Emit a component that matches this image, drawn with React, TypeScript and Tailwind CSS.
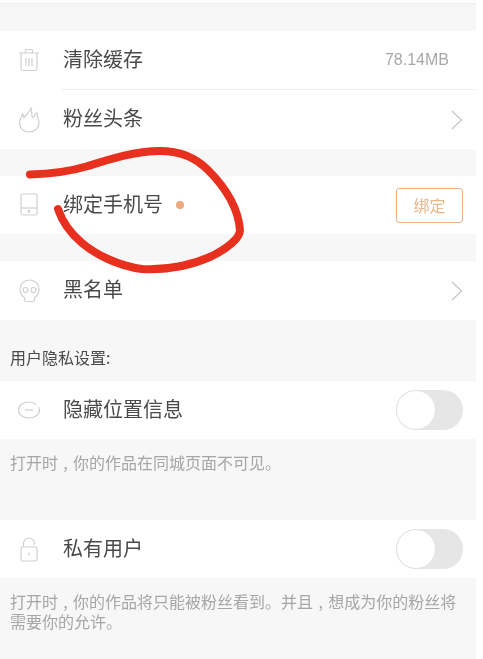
import React from "react";

const cjk = { fontFamily: '"Noto Sans CJK SC", "Noto Sans", sans-serif' };

function Trash() {
  return (
    <svg width="22" height="24" viewBox="0 0 22 24" fill="none" stroke="#cfcfcf" strokeWidth="1.2">
      <path d="M1 5h20M7.500 5V2.500a1 1 0 0 1 1-1h5a1 1 0 0 1 1 1V5M3 5v16a1.500 1.500 0 0 0 1.500 1.500h13A1.500 1.500 0 0 0 19 21V5M8 10v8M11 10v8M14 10v8" />
    </svg>
  );
}
function Flame() {
  return (
    <svg width="22" height="26" viewBox="0 0 22 26" fill="none" stroke="#cfcfcf" strokeWidth="1.2">
      <path d="M13 1c1 3 .5 6 1 8.500.3 1.500 1.500 1 2 0 .5-1 1-2.500 3-3.500-.5 3 2 5 2 10 0 5-4.500 9-10 9S1.500 21 1.500 16c0-4 2-5.500 3-9 1 1 1.500 2 1.500 3.500C8.500 8 11.500 5 13 1z" />
    </svg>
  );
}
function Phone() {
  return (
    <svg width="18" height="24" viewBox="0 0 18 24" fill="none" stroke="#cfcfcf" strokeWidth="1.2">
      <rect x="1" y="1" width="16" height="21" rx="1.500" />
      <path d="M1 15h16" />
      <circle cx="9" cy="18.500" r="0.800" fill="#cfcfcf" />
    </svg>
  );
}
function Skull() {
  return (
    <svg width="21" height="24" viewBox="0 0 21 24" fill="none" stroke="#cfcfcf" strokeWidth="1.2">
      <path d="M10.500 1C5 1 1 5 1 10.500c0 4 2 6.500 4.500 8V21a1.500 1.500 0 0 0 1.500 1.500h7a1.500 1.500 0 0 0 1.500-1.500v-2.500c2.500-1.500 4.500-4 4.500-8C20 5 16 1 10.500 1z" />
      <circle cx="6.500" cy="11" r="2.500" />
      <circle cx="14.500" cy="11" r="2.500" />
    </svg>
  );
}
function Minus() {
  return (
    <svg width="24" height="18" viewBox="0 0 24 18" fill="none" stroke="#cfcfcf" strokeWidth="1.2">
      <path d="M19 3.500C17 1.800 14.500 1 12 1 6 1 1.500 4.500 1.500 9S6 17 12 17c5.500 0 10.500-3.500 10.500-8 0-1-.3-2-.9-3" />
      <path d="M8 9h8" />
    </svg>
  );
}
function Lock() {
  return (
    <svg width="18" height="25" viewBox="0 0 18 25" fill="none" stroke="#cfcfcf" strokeWidth="1.2">
      <path d="M3.500 10V6.500C3.500 3.500 6 1 9 1s5.500 2.500 5.500 5.500V8" />
      <rect x="1" y="10" width="16" height="14" rx="1.500" />
      <path d="M9 15.500v3" />
    </svg>
  );
}
function Chevron() {
  return (
    <svg width="12" height="20" viewBox="0 0 12 20" fill="none" stroke="#c4c4c4" strokeWidth="1.2">
      <path d="M1 1l9.500 9L1 19" />
    </svg>
  );
}
function Toggle() {
  return (
    <div className="flex h-10 w-[67px] rounded-full bg-[#e6e6e6]">
      <div className="h-10 w-10 rounded-full border border-[#e2e2e2] bg-white" />
    </div>
  );
}

function Row({ icon, label, right, h = "h-[58px]" }: { icon: React.ReactNode; label: React.ReactNode; right?: React.ReactNode; h?: string }) {
  return (
    <div className={`flex ${h} items-center bg-white pr-[13px]`}>
      <div className="flex w-[63px] shrink-0 items-center justify-center pr-[5px]">{icon}</div>
      <div className="flex-1 pb-[3px] text-[20px] leading-none text-[#4a4a4a]">{label}</div>
      {right}
    </div>
  );
}

export default function App() {
  return (
    <div className="relative h-[659px] w-[483px] overflow-hidden bg-white blur-[0.3px]" style={cjk}>
      <div className="flex h-[659px] w-[476px] flex-col bg-[#f7f7f7]">
        <div className="h-[3px] shrink-0 bg-white" />
        <div className="h-px shrink-0 bg-[#ececec]" />
        <div className="h-[27px] shrink-0" />
        <Row icon={<Trash />} label="清除缓存" right={<span className="pr-[14px] pb-px text-[16px] font-light text-[#a8a8a8]" style={{ fontFamily: '"Liberation Sans", sans-serif' }}>78.14MB</span>} />
        <div className="flex h-px shrink-0 bg-white">
          <div className="w-[62px]" />
          <div className="flex-1 bg-[#eeeeee]" />
        </div>
        <Row icon={<Flame />} label="粉丝头条" right={<Chevron />} h="h-[59px]" />
        <div className="h-[27px] shrink-0" />
        <Row
          icon={<Phone />}
          label={
            <span className="flex items-center gap-[13px]">
              绑定手机号
              <span className="mt-[3px] h-2 w-2 rounded-full bg-[#eeaa7c]" />
            </span>
          }
          right={
            <div className="flex h-[35px] w-[67px] items-center justify-center rounded-[3px] border-[1.500px] border-[#eab37f] pb-px text-[16px] text-[#e8b78c]">
              绑定
            </div>
          }
        />
        <div className="h-[27px] shrink-0" />
        <Row icon={<Skull />} label="黑名单" right={<Chevron />} h="h-[59px]" />
        <div className="flex h-[61px] shrink-0 items-center pl-[10px] pt-[13px] text-[16px] leading-none text-[#4a4a4a]">用户隐私设置:</div>
        <Row icon={<Minus />} label="隐藏位置信息" right={<Toggle />} />
        <div className="h-[81px] shrink-0 px-[10px] pt-[13px] text-[16px] leading-[20px] text-[#a6a6a6]">{"打开时\u2004,\u2004你的作品在同城页面不可见。"}</div>
        <Row icon={<Lock />} label="私有用户" right={<Toggle />} />
        <div className="h-[81px] shrink-0 px-[10px] pt-[13px] text-[16px] leading-[20px] text-[#a6a6a6]">{"打开时\u2004,\u2004你的作品将只能被粉丝看到。并且\u2004,\u2004想成为你的粉丝将需要你的允许。"}</div>
      </div>
      <svg className="absolute left-0 top-0" width="483" height="659" viewBox="0 0 483 659" fill="none">
        <path
          d="M30 174.500C50 174 68 172 88 166C110 159 135 151 160 151C182 151 196 158 208 170C224 186 238 206 240 230C240 238 228 248 212 256C190 266 165 270 142 269C118 266 95 254 82 243C70 233 62 221 58 209"
          stroke="#e8301f"
          strokeWidth="8"
          strokeLinecap="round"
          strokeLinejoin="round"
        />
      </svg>
    </div>
  );
}
